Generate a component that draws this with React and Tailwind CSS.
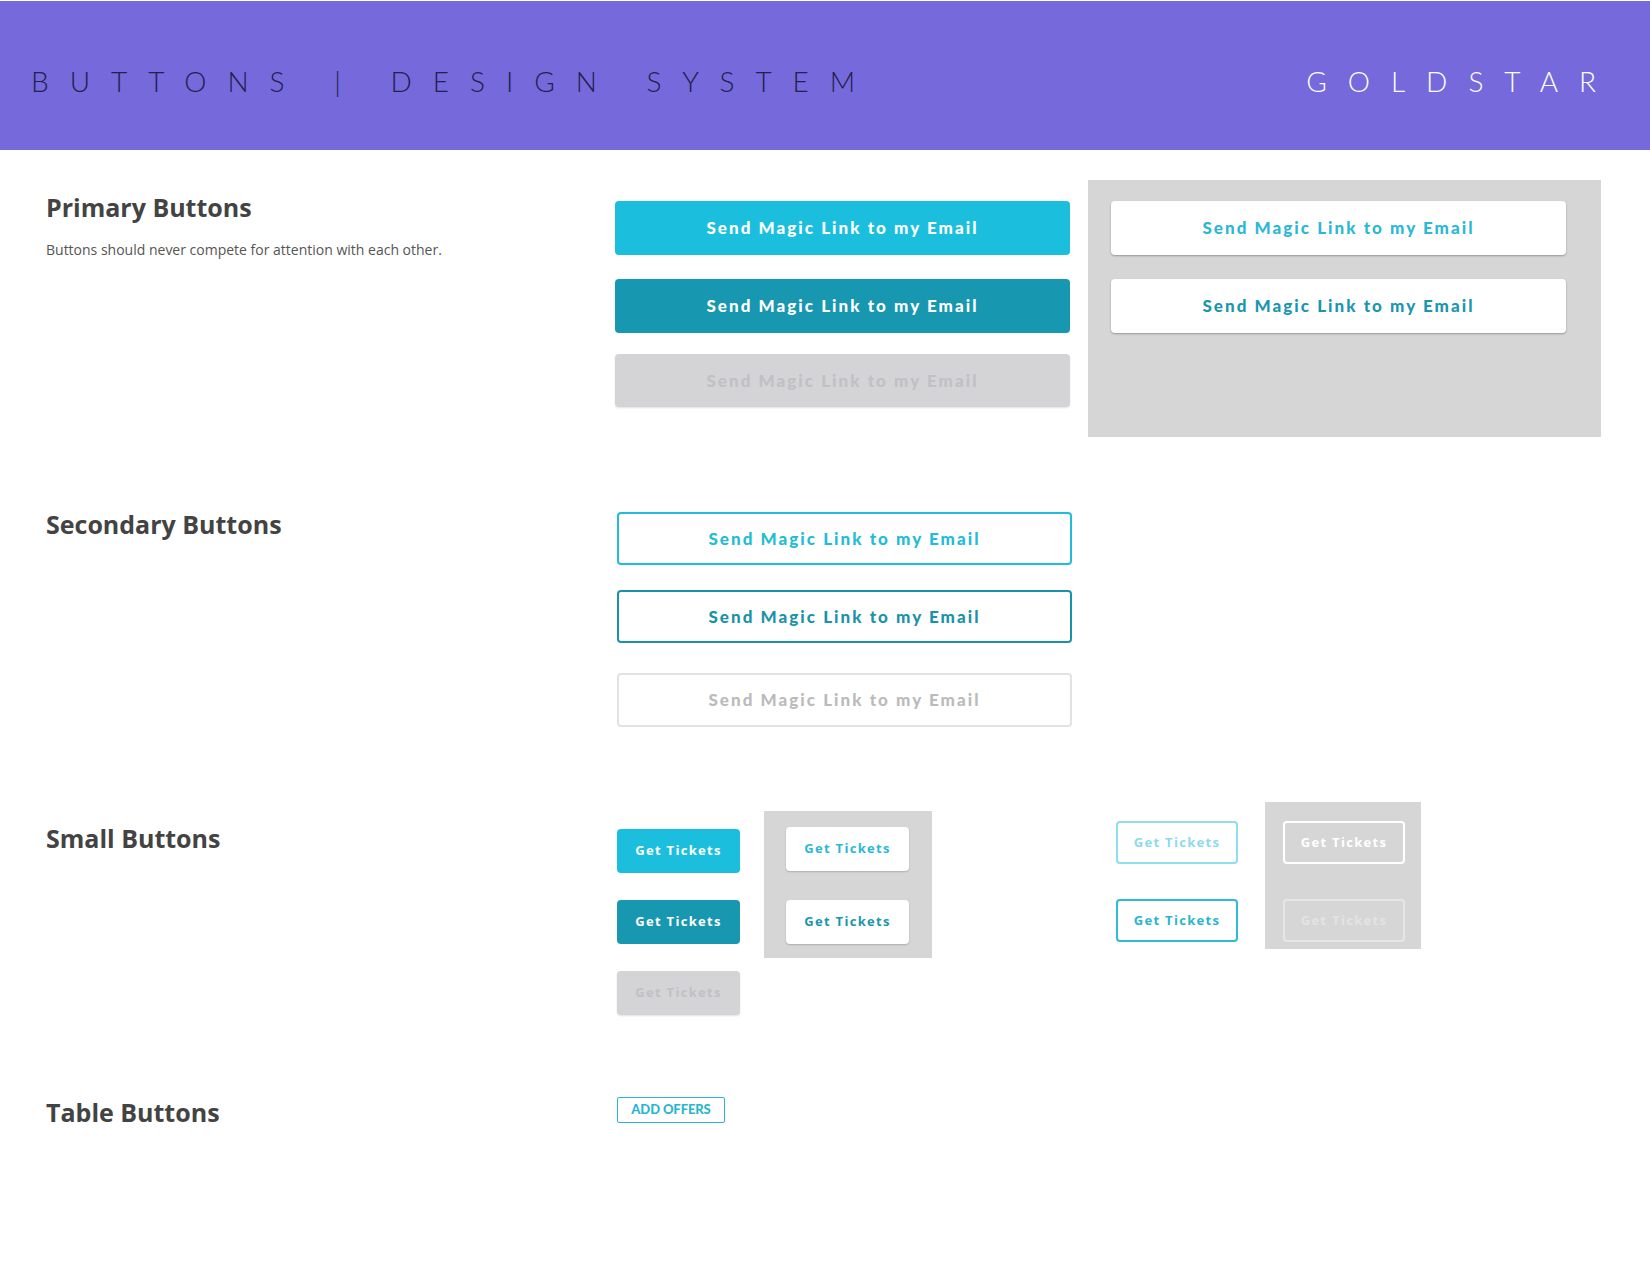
export default function App() {
  const heading =
    "font-['Open_Sans',sans-serif] font-bold text-[25px] leading-[30px] tracking-[0px] text-[#434343]";
  const bigText =
    "font-['Lato',sans-serif] font-black text-[17px] tracking-[2.05px]";
  const smallText =
    "font-['Open_Sans',sans-serif] font-bold text-[13px] tracking-[1.3px]";

  return (
    <div className="min-h-screen bg-white">
      <header className="h-[150px] bg-[#7669db] border-t border-white flex items-center justify-between pl-[31px] pr-[33px] pt-[10px]">
        <div className="font-['Lato',sans-serif] font-light text-[28px] tracking-[21px] text-[#24204c] whitespace-pre">
          BUTTONS | DESIGN SYSTEM
        </div>
        <div className="font-['Lato',sans-serif] font-light text-[28px] tracking-[21px] text-white whitespace-pre">
          GOLDSTAR
        </div>
      </header>

      <main className="pl-[46px]">
        {/* Primary */}
        <section className="flex items-start mt-[30px]">
          <div className="w-[569px] shrink-0 pt-[12px]">
            <h2 className={heading}>Primary Buttons</h2>
            <p className="mt-[18px] font-['Open_Sans',sans-serif] text-[14px] leading-[20px] text-[#555]">
              Buttons should never compete for attention with each other.
            </p>
          </div>
          <div className="flex flex-col pt-[21px]">
            <div className={`w-[455px] h-[54px] rounded-[4px] bg-[#1bbfdd] text-white flex items-center justify-center ${bigText}`}>
              Send Magic Link to my Email
            </div>
            <div className={`mt-[24px] w-[455px] h-[54px] rounded-[4px] bg-[#1797b0] text-white flex items-center justify-center ${bigText}`}>
              Send Magic Link to my Email
            </div>
            <div className={`mt-[21px] w-[455px] h-[53px] rounded-[4px] bg-[#d4d3d6] text-[#c1c0c4] shadow-[0_1px_2px_rgba(0,0,0,0.12)] flex items-center justify-center ${bigText}`}>
              Send Magic Link to my Email
            </div>
          </div>
          <div className="ml-[18px] w-[513px] h-[257px] bg-[#d6d6d6] pl-[23px] pt-[21px] flex flex-col gap-[24px]">
            <div className={`w-[455px] h-[54px] rounded-[4px] bg-white text-[#2bb8d6] shadow-[0_1px_2px_rgba(0,0,0,0.3)] flex items-center justify-center ${bigText}`}>
              Send Magic Link to my Email
            </div>
            <div className={`w-[455px] h-[54px] rounded-[4px] bg-white text-[#1a96af] shadow-[0_1px_2px_rgba(0,0,0,0.3)] flex items-center justify-center ${bigText}`}>
              Send Magic Link to my Email
            </div>
          </div>
        </section>

        {/* Secondary */}
        <section className="flex items-start mt-[72px]">
          <div className="w-[571px] shrink-0">
            <h2 className={heading}>Secondary Buttons</h2>
          </div>
          <div className="flex flex-col pt-[3px]">
            <div className={`w-[455px] h-[53px] rounded-[4px] border-2 border-[#23bcd6] bg-white text-[#23bcd6] flex items-center justify-center ${bigText}`}>
              Send Magic Link to my Email
            </div>
            <div className={`mt-[25px] w-[455px] h-[53px] rounded-[4px] border-2 border-[#1a93aa] bg-white text-[#1a93aa] flex items-center justify-center ${bigText}`}>
              Send Magic Link to my Email
            </div>
            <div className={`mt-[30px] w-[455px] h-[54px] rounded-[4px] border-2 border-[#e2e2e2] bg-white text-[#bbbbbb] flex items-center justify-center ${bigText}`}>
              Send Magic Link to my Email
            </div>
          </div>
        </section>

        {/* Small */}
        <section className="flex items-start mt-[75px]">
          <div className="w-[571px] shrink-0 pt-[21px]">
            <h2 className={heading}>Small Buttons</h2>
          </div>
          <div className="flex flex-col pt-[27px] gap-[27px]">
            <div className={`w-[123px] h-[44px] rounded-[4px] bg-[#1bbfdd] text-white flex items-center justify-center ${smallText}`}>
              Get Tickets
            </div>
            <div className={`w-[123px] h-[44px] rounded-[4px] bg-[#1797b0] text-white flex items-center justify-center ${smallText}`}>
              Get Tickets
            </div>
            <div className={`w-[123px] h-[44px] rounded-[4px] bg-[#d4d3d6] text-[#c1c0c4] shadow-[0_1px_2px_rgba(0,0,0,0.12)] flex items-center justify-center ${smallText}`}>
              Get Tickets
            </div>
          </div>
          <div className="ml-[24px] mt-[9px] w-[168px] h-[147px] bg-[#d6d6d6] pl-[22px] pt-[16px] flex flex-col">
            <div className={`w-[123px] h-[44px] rounded-[4px] bg-white text-[#2bb8d6] shadow-[0_1px_2px_rgba(0,0,0,0.2)] flex items-center justify-center ${smallText}`}>
              Get Tickets
            </div>
            <div className={`mt-[29px] w-[123px] h-[44px] rounded-[4px] bg-white text-[#1a96af] shadow-[0_1px_2px_rgba(0,0,0,0.2)] flex items-center justify-center ${smallText}`}>
              Get Tickets
            </div>
          </div>
          <div className="ml-[184px] pt-[19px] flex flex-col gap-[35px]">
            <div className={`w-[122px] h-[43px] rounded-[4px] border-2 border-[#8fdeeb] bg-white text-[#8cdbea] flex items-center justify-center ${smallText}`}>
              Get Tickets
            </div>
            <div className={`w-[122px] h-[43px] rounded-[4px] border-2 border-[#2ebbd3] bg-white text-[#28b5d0] flex items-center justify-center ${smallText}`}>
              Get Tickets
            </div>
          </div>
          <div className="ml-[27px] w-[156px] h-[147px] bg-[#d6d6d6] pl-[18px] pt-[19px] flex flex-col gap-[35px]">
            <div className={`w-[122px] h-[43px] rounded-[4px] border-2 border-white text-white flex items-center justify-center ${smallText}`}>
              Get Tickets
            </div>
            <div className={`w-[122px] h-[43px] rounded-[4px] border-2 border-[#e6e6e6] text-[#e3e3e3] flex items-center justify-center ${smallText}`}>
              Get Tickets
            </div>
          </div>
        </section>

        {/* Table */}
        <section className="flex items-start mt-[82px] pb-[120px]">
          <div className="w-[571px] shrink-0">
            <h2 className={heading}>Table Buttons</h2>
          </div>
          <div className="w-[108px] h-[26px] rounded-[2px] border border-[#2ab6cf] flex items-center justify-center font-['Lato',sans-serif] font-black text-[13px] text-[#2ab6cf] tracking-[-0.1px]">
            ADD OFFERS
          </div>
        </section>
      </main>
    </div>
  );
}
